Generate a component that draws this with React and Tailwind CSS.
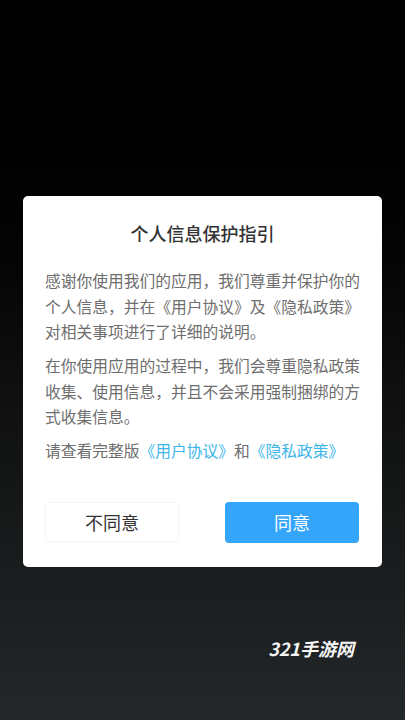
import React from 'react'

const font = { fontFamily: '"Noto Sans CJK SC", "Noto Sans", sans-serif' }

const App = () => {
  return (
    <div
      className="w-[405px] h-[720px] overflow-hidden flex flex-col items-start bg-gradient-to-b from-black via-[#0d0d0d] to-[#23282a] pt-[196px] pl-[23px]"
      style={font}
    >
      {/* Dialog */}
      <div className="w-[359px] bg-white rounded-[5px] flex flex-col pt-[25px] pb-[24px]">
        <h2 className="text-center text-[18px] leading-[24px] text-[#333333] font-medium">个人信息保护指引</h2>

        <div className="mt-[23px] pl-[22px] pr-[22px] text-[15.75px] leading-[25.5px] text-[#6e6e6e] whitespace-nowrap">
          <p>
            <span className="block">感谢你使用我们的应用，我们尊重并保护你的</span>
            <span className="block">个人信息，并在《用户协议》及《隐私政策》</span>
            <span className="block">对相关事项进行了详细的说明。</span>
          </p>
          <p className="mt-[8.5px]">
            <span className="block">在你使用应用的过程中，我们会尊重隐私政策</span>
            <span className="block">收集、使用信息，并且不会采用强制捆绑的方</span>
            <span className="block">式收集信息。</span>
          </p>
          <p className="mt-[8px]">
            请查看完整版<span className="text-[#3db6e8]">《用户协议》</span>和<span className="text-[#3db6e8]">《隐私政策》</span>
          </p>
        </div>

        <div className="mt-[39px] pl-[22px] pr-[23px] flex justify-between">
          <button className="w-[134px] h-[40px] rounded-[4px] bg-white border border-[#f4f4f4] text-[18px] text-[#333333]">
            不同意
          </button>
          <button className="w-[134px] h-[41px] rounded-[4px] bg-[#35a5fb] text-[18px] text-white">
            同意
          </button>
        </div>
      </div>

      {/* Watermark */}
      <div className="mt-[69px] self-end mr-[51px] text-[18px] leading-[24px] font-semibold italic text-[#f5f5f5]">
        321手游网
      </div>
    </div>
  )
}

export default App
